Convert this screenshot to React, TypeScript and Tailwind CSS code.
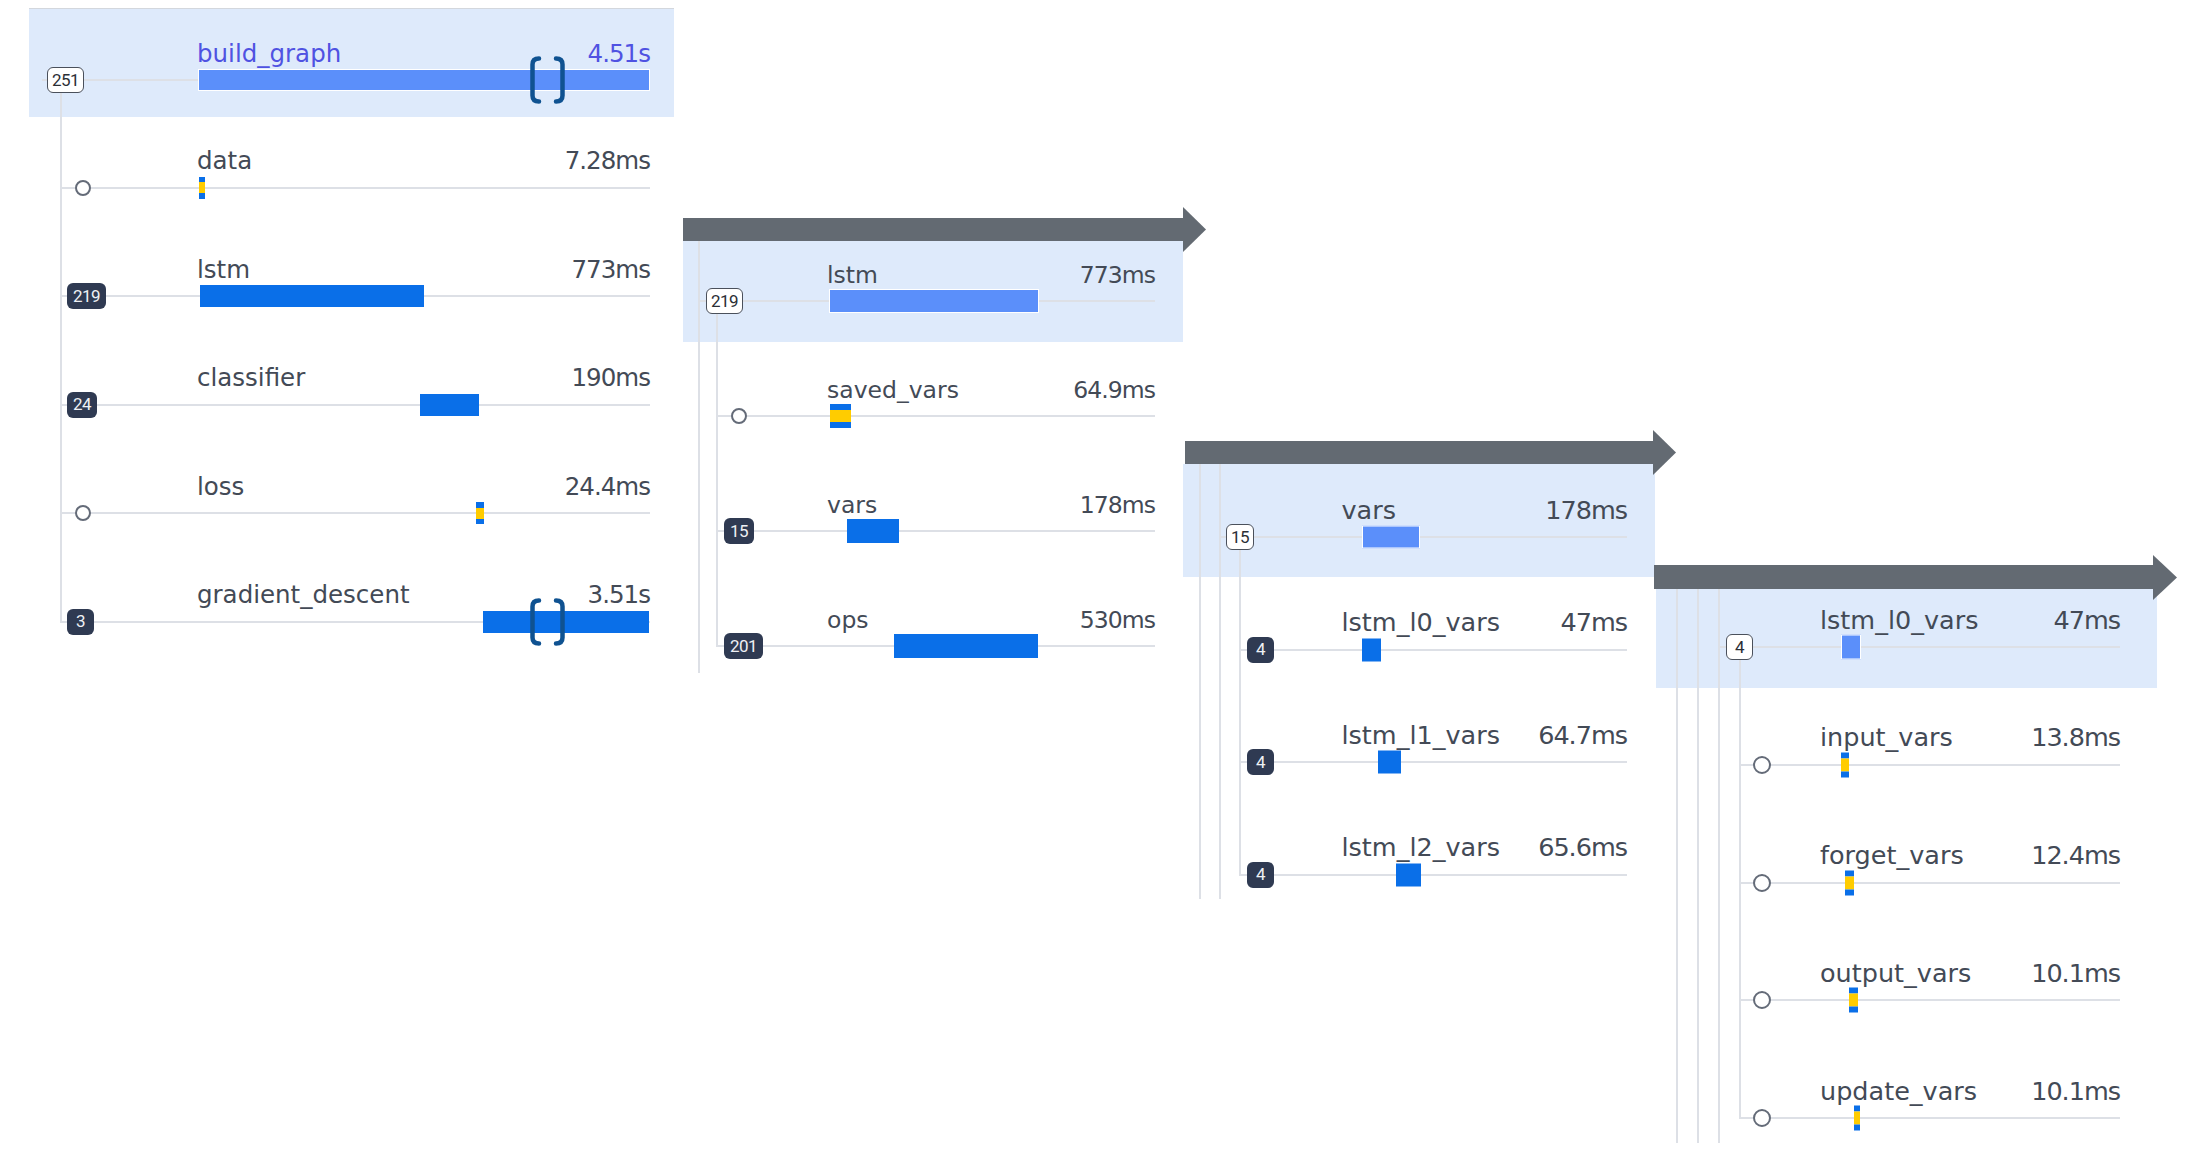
import React from 'react';

type Marker = { kind: 'badge'; value: string; dark: boolean } | { kind: 'circle' };
type BarKind = 'solid' | 'stripe' | 'selected';

interface Row {
  label: string;
  duration: string;
  marker: Marker;
  bar: [number, number]; // px from the timeline's left edge
  barKind: BarKind;
  brackets?: boolean;
}

interface PanelCfg {
  pos: string;
  rowH: string;
  lastRowH: string;
  textH: string;
  lineH: string;
  font: string;
  barH: string;
  gutterW: string;
  lead: string;
  spacer: string;
  depth: number;
  rootHidden?: boolean;
  headSeg: string;
  childLine: string;
  badgeSeg: string;
  circleSeg: string;
  circle: string;
  pr: string;
  headerExtra?: string;
  headColor?: string;
  header: Row;
  children: Row[];
}

const LINE = 'bg-[#dde0e6]';

const panels: PanelCfg[] = [
  {
    pos: 'left-[29px] top-[8px] w-[645px]',
    rowH: 'h-[108.6px]',
    lastRowH: 'h-[108.6px]',
    textH: 'h-[58px]',
    lineH: 'h-[72px]',
    font: 'text-[24.5px]',
    barH: 'h-[22px]',
    gutterW: 'w-[168px]',
    lead: 'w-[11px]',
    spacer: 'w-[18px]',
    depth: 1,
    rootHidden: true,
    headSeg: 'w-[5px]',
    childLine: 'ml-[18px]',
    badgeSeg: 'w-[5px]',
    circleSeg: 'w-[13px]',
    circle: 'h-[16px] w-[16px]',
    pr: 'pr-[24px]',
    headerExtra: 'border-t border-[#d3d7dd]',
    headColor: 'text-[#4f52e2]',
    header: { label: 'build_graph', duration: '4.51s', marker: { kind: 'badge', value: '251', dark: false }, bar: [1, 453], barKind: 'selected', brackets: true },
    children: [
      { label: 'data', duration: '7.28ms', marker: { kind: 'circle' }, bar: [2, 8], barKind: 'stripe' },
      { label: 'lstm', duration: '773ms', marker: { kind: 'badge', value: '219', dark: true }, bar: [3, 227], barKind: 'solid' },
      { label: 'classifier', duration: '190ms', marker: { kind: 'badge', value: '24', dark: true }, bar: [223, 282], barKind: 'solid' },
      { label: 'loss', duration: '24.4ms', marker: { kind: 'circle' }, bar: [279, 287], barKind: 'stripe' },
      { label: 'gradient_descent', duration: '3.51s', marker: { kind: 'badge', value: '3', dark: true }, bar: [286, 452], barKind: 'solid', brackets: true },
    ],
  },
  {
    pos: 'left-[683px] top-[227px] w-[500px]',
    rowH: 'h-[115px]',
    lastRowH: 'h-[101px]',
    textH: 'h-[61px]',
    lineH: 'h-[75px]',
    font: 'text-[23.5px]',
    barH: 'h-[24px]',
    gutterW: 'w-[144px]',
    lead: 'w-[15px]',
    spacer: 'w-[16px]',
    depth: 1,
    headSeg: 'w-[6px]',
    childLine: 'ml-[16px]',
    badgeSeg: 'w-[6px]',
    circleSeg: 'w-[13px]',
    circle: 'h-[16px] w-[16px]',
    pr: 'pr-[28px]',
    header: { label: 'lstm', duration: '773ms', marker: { kind: 'badge', value: '219', dark: false }, bar: [2, 212], barKind: 'selected' },
    children: [
      { label: 'saved_vars', duration: '64.9ms', marker: { kind: 'circle' }, bar: [3, 24], barKind: 'stripe' },
      { label: 'vars', duration: '178ms', marker: { kind: 'badge', value: '15', dark: true }, bar: [20, 72], barKind: 'solid' },
      { label: 'ops', duration: '530ms', marker: { kind: 'badge', value: '201', dark: true }, bar: [67, 211], barKind: 'solid' },
    ],
  },
  {
    pos: 'left-[1183px] top-[464px] w-[472px]',
    rowH: 'h-[112.5px]',
    lastRowH: 'h-[97px]',
    textH: 'h-[60px]',
    lineH: 'h-[74px]',
    font: 'text-[25.5px]',
    barH: 'h-[23px]',
    gutterW: 'w-[158.5px]',
    lead: 'w-[16px]',
    spacer: 'w-[18px]',
    depth: 2,
    headSeg: 'w-[5px]',
    childLine: 'ml-[18px]',
    badgeSeg: 'w-[6px]',
    circleSeg: 'w-[13px]',
    circle: 'h-[16px] w-[16px]',
    pr: 'pr-[28px]',
    header: { label: 'vars', duration: '178ms', marker: { kind: 'badge', value: '15', dark: false }, bar: [20.5, 78.5], barKind: 'selected' },
    children: [
      { label: 'lstm_l0_vars', duration: '47ms', marker: { kind: 'badge', value: '4', dark: true }, bar: [20.5, 39], barKind: 'solid' },
      { label: 'lstm_l1_vars', duration: '64.7ms', marker: { kind: 'badge', value: '4', dark: true }, bar: [36, 59], barKind: 'solid' },
      { label: 'lstm_l2_vars', duration: '65.6ms', marker: { kind: 'badge', value: '4', dark: true }, bar: [54.5, 79], barKind: 'solid' },
    ],
  },
  {
    pos: 'left-[1656px] top-[570px] w-[501px]',
    rowH: 'h-[117.75px]',
    lastRowH: 'h-[102px]',
    textH: 'h-[64px]',
    lineH: 'h-[78px]',
    font: 'text-[25.5px]',
    barH: 'h-[25px]',
    gutterW: 'w-[164px]',
    lead: 'w-[20px]',
    spacer: 'w-[19px]',
    depth: 3,
    headSeg: 'w-[6px]',
    childLine: 'ml-[19px]',
    badgeSeg: 'w-[6px]',
    circleSeg: 'w-[12px]',
    circle: 'h-[18px] w-[18px]',
    pr: 'pr-[37px]',
    header: { label: 'lstm_l0_vars', duration: '47ms', marker: { kind: 'badge', value: '4', dark: false }, bar: [21, 41], barKind: 'selected' },
    children: [
      { label: 'input_vars', duration: '13.8ms', marker: { kind: 'circle' }, bar: [21, 29], barKind: 'stripe' },
      { label: 'forget_vars', duration: '12.4ms', marker: { kind: 'circle' }, bar: [25, 34], barKind: 'stripe' },
      { label: 'output_vars', duration: '10.1ms', marker: { kind: 'circle' }, bar: [29, 38], barKind: 'stripe' },
      { label: 'update_vars', duration: '10.1ms', marker: { kind: 'circle' }, bar: [34, 40], barKind: 'stripe' },
    ],
  },
];

const Guides: React.FC<{ cfg: PanelCfg; count: number; lastPartial?: boolean }> = ({ cfg, count, lastPartial }) => {
  const items: React.ReactNode[] = [<div key="lead" className={`${cfg.lead} shrink-0`} />];
  for (let i = 0; i < count; i++) {
    if (i > 0) items.push(<div key={`s${i}`} className={`${cfg.spacer} shrink-0`} />);
    const hidden = i === 0 && cfg.rootHidden;
    const partial = lastPartial && i === count - 1;
    items.push(
      <div
        key={`g${i}`}
        className={`w-[2px] shrink-0 ${hidden ? 'bg-transparent' : LINE} ${partial ? `${cfg.lineH} self-start` : 'self-stretch'}`}
      />
    );
  }
  return <>{items}</>;
};

const Badge: React.FC<{ value: string; dark: boolean }> = ({ value, dark }) => (
  <div
    className={`flex h-[26px] min-w-[27px] shrink-0 items-center justify-center rounded-[6px] font-['Roboto',sans-serif] text-[17px] leading-none tracking-[-0.5px] ${
      dark ? 'bg-[#2f3a52] px-[6px] text-[#eef0f4]' : 'border-[1.5px] border-[#4a505b] bg-white px-[4px] text-[#2b2f36]'
    }`}
  >
    {value}
  </div>
);

const Brackets = () => (
  <svg className="absolute left-[332px] top-1/2 -translate-y-1/2" width="37" height="50" viewBox="0 0 37 50" fill="none">
    <path d="M10 3.5C5.5 3.5 3.5 5.5 3.5 9.5V40.5C3.5 44.5 5.5 46.5 10 46.5" stroke="#0f5291" strokeWidth="4.5" strokeLinecap="round" />
    <path d="M27 3.5C31.5 3.5 33.5 5.5 33.5 9.5V40.5C33.5 44.5 31.5 46.5 27 46.5" stroke="#0f5291" strokeWidth="4.5" strokeLinecap="round" />
  </svg>
);

const BarView: React.FC<{ row: Row; cfg: PanelCfg }> = ({ row, cfg }) => {
  const [start, end] = row.bar;
  const style = { left: start, width: end - start };
  if (row.barKind === 'stripe') {
    return (
      <div className={`absolute top-1/2 flex -translate-y-1/2 flex-col ${cfg.barH}`} style={style}>
        <div className="h-[24%] bg-[#0a6fe8]" />
        <div className="flex-1 bg-[#ffcc00]" />
        <div className="h-[24%] bg-[#0a6fe8]" />
      </div>
    );
  }
  return (
    <div
      className={`absolute top-1/2 -translate-y-1/2 ${cfg.barH} ${
        row.barKind === 'selected' ? 'border border-white bg-[#5b8ffa]' : 'bg-[#0a6fe8]'
      }`}
      style={style}
    />
  );
};

const TreeRow: React.FC<{ cfg: PanelCfg; row: Row; header?: boolean; last?: boolean }> = ({ cfg, row, header, last }) => {
  const seg = row.marker.kind === 'circle' ? cfg.circleSeg : header ? cfg.headSeg : cfg.badgeSeg;
  const color = header && cfg.headColor ? cfg.headColor : 'text-[#434a56]';
  return (
    <div className={`flex ${last ? cfg.lastRowH : cfg.rowH} ${header ? `bg-[#deeafb] ${cfg.headerExtra ?? ''}` : ''}`}>
      {/* tree gutter */}
      <div className={`flex shrink-0 ${cfg.gutterW}`}>
        <Guides cfg={cfg} count={header ? cfg.depth : cfg.depth + 1} lastPartial={last} />
        <div className="flex min-w-0 flex-1 flex-col">
          <div className={`shrink-0 ${cfg.textH}`} />
          <div className="flex h-[26px] shrink-0 items-center">
            <div className={`h-[2px] shrink-0 ${seg} ${LINE}`} />
            {row.marker.kind === 'circle' ? (
              <div className={`shrink-0 rounded-full border-2 border-[#646b78] bg-white ${cfg.circle}`} />
            ) : (
              <Badge value={row.marker.value} dark={row.marker.dark} />
            )}
            <div className={`h-[2px] flex-1 ${LINE}`} />
          </div>
          {header && <div className={`w-[2px] flex-1 ${cfg.childLine} ${LINE}`} />}
        </div>
      </div>
      {/* label, duration and timeline */}
      <div className={`flex min-w-0 flex-1 flex-col ${cfg.pr}`}>
        <div className={`flex shrink-0 items-end justify-between pb-[1px] leading-none ${cfg.textH} ${cfg.font} ${color}`}>
          <span>{row.label}</span>
          <span className="tracking-[-0.04em]">{row.duration}</span>
        </div>
        <div className="relative flex h-[26px] shrink-0 items-center">
          <div className={`h-[2px] w-full ${LINE}`} />
          <BarView row={row} cfg={cfg} />
          {row.brackets && <Brackets />}
        </div>
      </div>
    </div>
  );
};

const Panel: React.FC<{ cfg: PanelCfg }> = ({ cfg }) => (
  <div className={`absolute flex flex-col ${cfg.pos}`}>
    <TreeRow cfg={cfg} row={cfg.header} header />
    {cfg.children.map((r, i) => (
      <TreeRow key={r.label} cfg={cfg} row={r} last={i === cfg.children.length - 1} />
    ))}
  </div>
);

// drill-down arrows between the panels
const Arrow: React.FC<{ pos: string; w: number; bar: number; y0: number; y1: number }> = ({ pos, w, bar, y0, y1 }) => (
  <svg className={`absolute ${pos}`} width={w} height="45" viewBox={`0 0 ${w} 45`}>
    <rect x="0" y={y0} width={bar} height={y1 - y0} fill="#636a72" />
    <polygon points={`${bar},0 ${w},22.5 ${bar},45`} fill="#636a72" />
  </svg>
);

export default function App() {
  return (
    <div className="relative h-[1164px] w-[2187px] overflow-hidden bg-white font-['DejaVu_Sans',sans-serif]">
      {panels.map((p, i) => (
        <Panel key={i} cfg={p} />
      ))}
      <Arrow pos="left-[683px] top-[207px]" w={523} bar={500} y0={11} y1={34} />
      <Arrow pos="left-[1185px] top-[430px]" w={491} bar={468} y0={11} y1={34} />
      <Arrow pos="left-[1654px] top-[555px]" w={523} bar={499} y0={10} y1={34} />
    </div>
  );
}
